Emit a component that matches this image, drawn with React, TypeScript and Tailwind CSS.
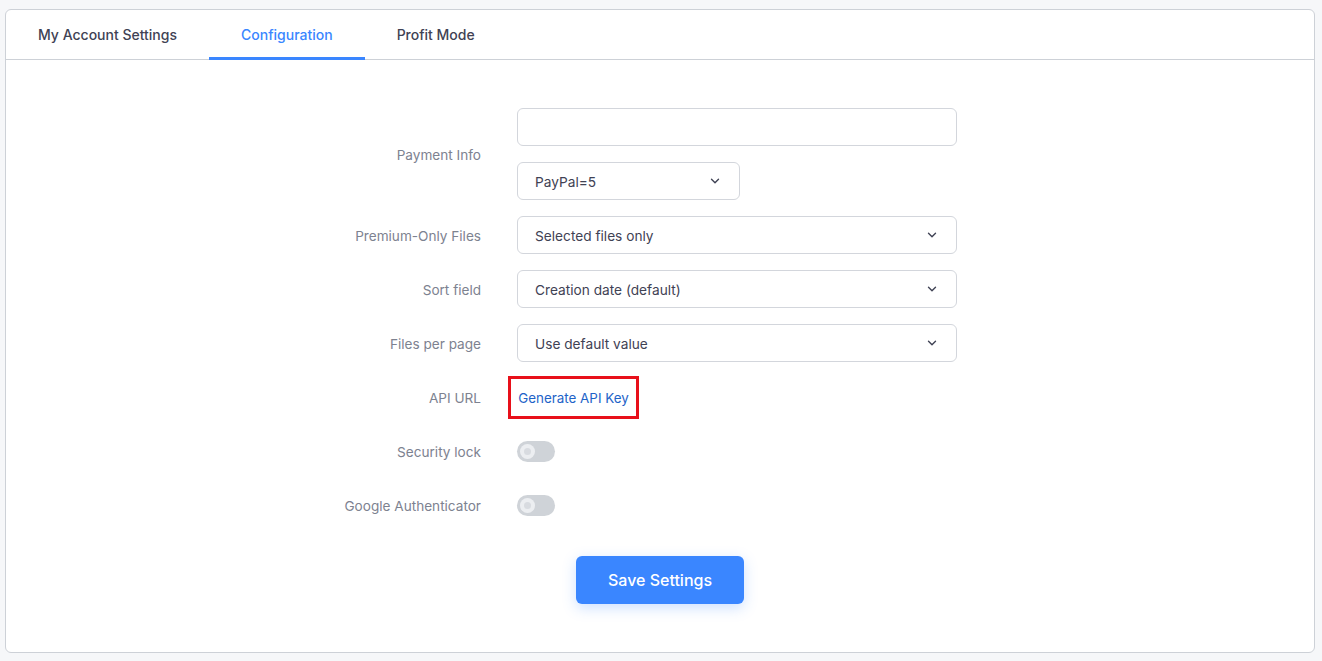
import React from "react";

const Chevron = () => (
  <svg width="14" height="14" viewBox="0 0 24 24" fill="none" stroke="#3f4254" strokeWidth="2.4" strokeLinecap="round" strokeLinejoin="round">
    <path d="M6 9l6 6 6-6" />
  </svg>
);

const Select = ({ value, w }: { value: string; w: string }) => (
  <div className={`${w} h-[38px] rounded-md border border-[#d3d6dc] bg-white flex items-center justify-between pl-[17px] pr-[17px] text-[13.7px] text-[#3f4254]`}>
    <span className="pt-[2px]">{value}</span>
    <Chevron />
  </div>
);

const Toggle = () => (
  <div className="w-[38px] h-[21px] rounded-full bg-[#cfd3d8] flex items-center pl-[3px]">
    <div className="w-[15px] h-[15px] rounded-full bg-[#eceef1] flex items-center justify-center">
      <div className="w-[7px] h-[7px] rounded-full bg-[#d8dbe0]" />
    </div>
  </div>
);

const Row = ({ label, children, h = "h-[38px]" }: { label: string; children: React.ReactNode; h?: string }) => (
  <div className={`flex items-center ${h}`}>
    <div className="w-[475px] text-right text-[13.6px] text-[#7d8290] pt-[2px]">{label}</div>
    <div className="ml-[36px] flex items-center">{children}</div>
  </div>
);

export default function App() {
  return (
    <div className="min-h-[661px] bg-[#f6f7f9] pt-[9px] pl-[5px] pr-[7px] pb-[8px]" style={{ fontFamily: "Inter, 'Noto Sans', sans-serif" }}>
      <div className="h-[644px] rounded-[6px] border border-[#cdd1d7] bg-white flex flex-col">
        <div className="flex h-[50px] border-b border-[#cdd1d7]">
          <div className="px-[32px] flex items-center text-[14px] font-medium text-[#3f4254] pb-[1px]">My Account Settings</div>
          <div className="px-[32px] flex items-center text-[14px] font-medium text-[#3a86ff] border-b-[3px] border-[#3a86ff] mb-[-1px] pt-[1px]">Configuration</div>
          <div className="px-[32px] flex items-center text-[14px] font-medium text-[#3f4254] pb-[1px]">Profit Mode</div>
        </div>
        <div className="pt-[48px] flex flex-col gap-[16px]">
          <div className="flex items-center">
            <div className="w-[475px] text-right text-[13.6px] text-[#7d8290] pt-[2px]">Payment Info</div>
            <div className="ml-[36px] flex flex-col gap-[16px]">
              <div className="w-[440px] h-[38px] rounded-md border border-[#d3d6dc] bg-white" />
              <Select value="PayPal=5" w="w-[223px]" />
            </div>
          </div>
          <Row label="Premium-Only Files"><Select value="Selected files only" w="w-[440px]" /></Row>
          <Row label="Sort field"><Select value="Creation date (default)" w="w-[440px]" /></Row>
          <Row label="Files per page"><Select value="Use default value" w="w-[440px]" /></Row>
          <Row label="API URL">
            <div className="ml-[-9px] border-[3px] border-[#e8101a] h-[43px] w-[131px] flex items-center justify-center text-[13.4px] text-[#1e63c8] pt-[2px]">Generate API Key</div>
          </Row>
          <Row label="Security lock"><Toggle /></Row>
          <Row label="Google Authenticator"><Toggle /></Row>
          <div className="flex justify-center mt-[16px]">
            <button className="w-[168px] h-[48px] rounded-md bg-[#3a86ff] text-white text-[16px] font-medium shadow-[0_4px_14px_rgba(58,134,255,0.25)]">Save Settings</button>
          </div>
        </div>
      </div>
    </div>
  );
}
